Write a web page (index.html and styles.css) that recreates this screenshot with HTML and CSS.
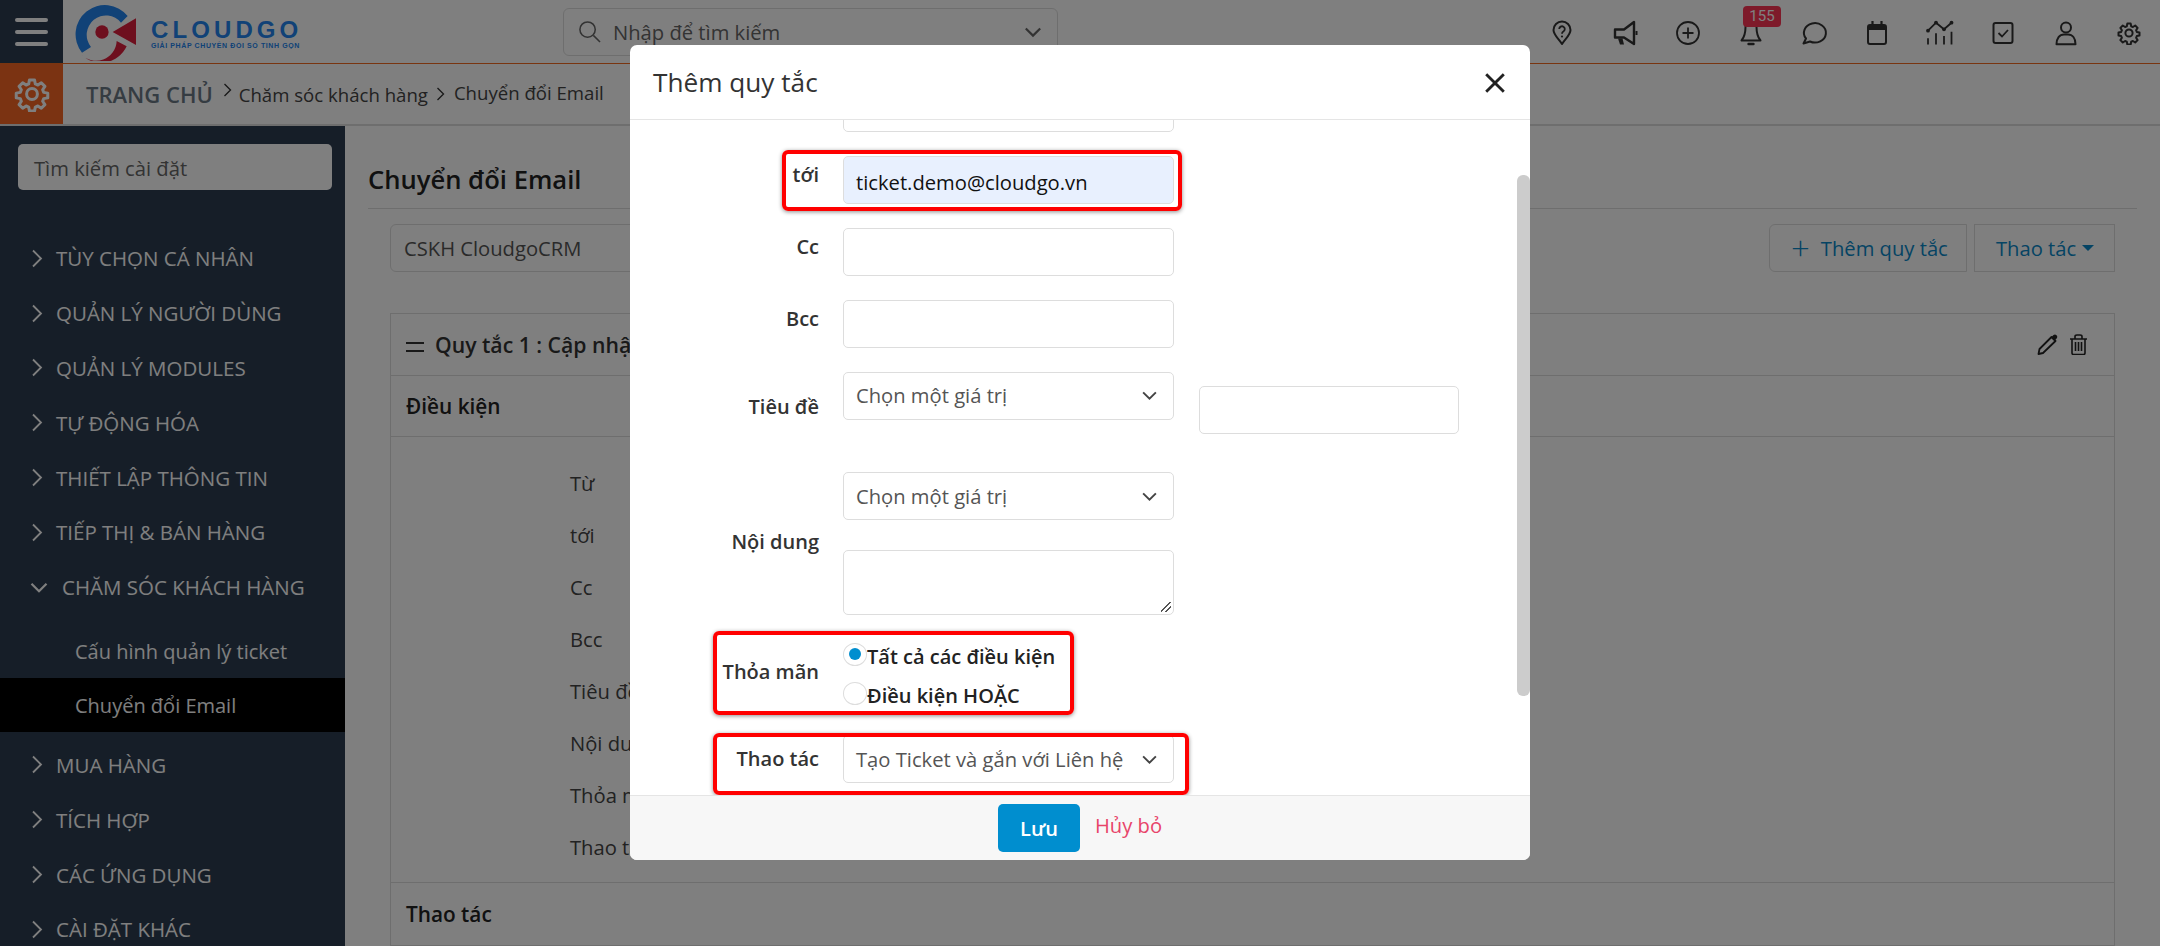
FILE: index.html
```html
<!DOCTYPE html>
<html lang="vi">
<head>
<meta charset="utf-8">
<title>Chuyển đổi Email</title>
<link rel="stylesheet" href="styles.css">
</head>
<body>
<svg class="defs" aria-hidden="true">
  <symbol id="gear" viewBox="0 0 24 24"><path d="M10.3 2.6h3.4l.5 2.7 1.7.7 2.3-1.5 2.4 2.4-1.5 2.3.7 1.7 2.7.5v3.2l-2.7.5-.7 1.7 1.5 2.3-2.4 2.4-2.3-1.5-1.7.7-.5 2.7h-3.4l-.5-2.7-1.7-.7-2.3 1.5-2.4-2.4 1.5-2.3-.7-1.7-2.7-.5v-3.2l2.7-.5.7-1.7-1.5-2.3 2.4-2.4 2.3 1.5 1.7-.7z" fill="none" stroke="currentColor" stroke-width="2" stroke-linejoin="round"/><circle cx="12" cy="12" r="3.6" fill="none" stroke="currentColor" stroke-width="2"/></symbol>
  <symbol id="right" viewBox="0 0 12 20"><path d="M2 2l8 8-8 8" fill="none" stroke="currentColor" stroke-width="1.8"/></symbol>
  <symbol id="down" viewBox="0 0 16 10"><path d="M2 2l6 6 6-6" fill="none" stroke="currentColor" stroke-width="1.8"/></symbol>
</svg>

<header class="topbar">
  <button class="menu-btn" aria-label="menu"><span></span><span></span><span></span></button>
  <div class="logo">
    <svg class="logo-mark" viewBox="222 6 190 174">
      <path d="M385 45A85 85 0 1 0 248 155L275 138A56 56 0 0 1 365 65z" fill="#2284ee"/>
      <path d="M245 160A85 85 0 0 0 382 136L352 120A62 62 0 0 1 245 160z" fill="#dc1e3c"/>
      <circle cx="308" cy="93" r="20" fill="#dc1e3c"/>
      <path d="M340 93L410 52V132z" fill="#dc1e3c"/>
    </svg>
    <div class="logo-text"><strong>CLOUDGO</strong><small>GIẢI PHÁP CHUYỂN ĐỔI SỐ TINH GỌN</small></div>
  </div>
  <div class="search">
    <svg class="search-ico" viewBox="0 0 24 24"><circle cx="10" cy="10" r="8" fill="none" stroke="currentColor" stroke-width="1.6"/><path d="M16 16l7 7" stroke="currentColor" stroke-width="1.6"/></svg>
    <span class="search-ph">Nhập để tìm kiếm</span>
    <svg class="search-caret"><use href="#down"/></svg>
  </div>
  <nav class="top-icons">
    <div class="top-icon"><svg viewBox="0 0 24 24"><path d="M12 23C9 18 3.5 14 3.5 9a8.5 8.5 0 0 1 17 0c0 5-5.5 9-8.5 14z" fill="none" stroke="currentColor" stroke-width="2" stroke-linejoin="round"/><path d="M9.2 8a2.8 2.8 0 1 1 4.2 2.5c-.9.5-1.4 1-1.4 2.2" fill="none" stroke="currentColor" stroke-width="1.8"/><circle cx="12" cy="15.5" r="1.1" fill="currentColor"/></svg></div>
    <div class="top-icon"><svg viewBox="0 0 24 24"><path d="M2 8.5h9l10-7.5v22l-10-6.5H2z" fill="none" stroke="currentColor" stroke-width="2.4" stroke-linejoin="round"/><path d="M5 17.5l2 6h4l-1.5-6z" fill="currentColor"/><path d="M23.5 10v4" stroke="currentColor" stroke-width="2"/></svg></div>
    <div class="top-icon"><svg viewBox="0 0 24 24"><circle cx="12" cy="12" r="11" fill="none" stroke="currentColor" stroke-width="1.8"/><path d="M12 6.5v11M6.5 12h11" stroke="currentColor" stroke-width="1.8"/></svg></div>
    <div class="top-icon bell">
      <svg viewBox="0 0 24 24"><path d="M6.5 6c0 7-1 10-4 13.5h19c-3-3.5-4-6.5-4-13.5a5.5 5.5 0 0 0-11 0z" fill="none" stroke="currentColor" stroke-width="2" stroke-linejoin="round"/><path d="M9.5 23h5" stroke="currentColor" stroke-width="2.4" stroke-linecap="round"/></svg>
      <span class="badge">155</span>
    </div>
    <div class="top-icon"><svg viewBox="0 0 24 24"><path d="M1.5 22.5L4 17.5A11 9.7 0 1 1 8 20.5z" fill="none" stroke="currentColor" stroke-width="2" stroke-linejoin="round"/></svg></div>
    <div class="top-icon"><svg viewBox="0 0 24 24"><rect x="3" y="4" width="18" height="19" rx="2" fill="none" stroke="currentColor" stroke-width="2"/><path d="M3 4h18v5H3z" fill="currentColor"/><path d="M7.5 0v5M16.5 0v5" stroke="currentColor" stroke-width="2.2"/></svg></div>
    <div class="top-icon"><svg viewBox="0 0 24 24"><path d="M0 9.7L8 1.7l8 6.6 7.5-6.6" fill="none" stroke="currentColor" stroke-width="1.8"/><circle cx="0" cy="9.7" r="1.9" fill="currentColor"/><circle cx="8" cy="1.7" r="1.9" fill="currentColor"/><circle cx="16" cy="8.3" r="1.9" fill="currentColor"/><circle cx="23.5" cy="1.7" r="1.9" fill="currentColor"/><path d="M0 17.3v6.2M8 12.3v11.2M16 15v8.5M23.5 10.7v12.8" stroke="currentColor" stroke-width="1.8"/></svg></div>
    <div class="top-icon"><svg viewBox="0 0 24 24"><rect x="2.5" y="2" width="19" height="20" rx="2" fill="none" stroke="currentColor" stroke-width="2"/><path d="M7.5 12l3.5 3.5 6-6.500" fill="none" stroke="currentColor" stroke-width="1.8"/></svg></div>
    <div class="top-icon"><svg viewBox="0 0 24 24"><circle cx="12" cy="6.5" r="5" fill="none" stroke="currentColor" stroke-width="2"/><path d="M2.5 23.3c0-6 3-9.800 7.500-9.800h4c4.500 0 7.500 3.800 7.500 9.800z" fill="none" stroke="currentColor" stroke-width="2" stroke-linejoin="round"/></svg></div>
    <div class="top-icon"><svg><use href="#gear"/></svg></div>
  </nav>
</header>

<div class="crumbs">
  <div class="crumb-gear"><svg><use href="#gear"/></svg></div>
  <span class="crumb-home">TRANG CHỦ</span>
  <svg class="crumb-sep crumb-sep-first"><use href="#right"/></svg>
  <span class="crumb">Chăm sóc khách hàng</span>
  <svg class="crumb-sep"><use href="#right"/></svg>
  <span class="crumb crumb-last">Chuyển đổi Email</span>
</div>

<div class="shell">
  <aside class="sidebar">
    <div class="side-search">Tìm kiếm cài đặt</div>
    <ul class="side-menu">
      <li class="side-item"><svg><use href="#right"/></svg>TÙY CHỌN CÁ NHÂN</li>
      <li class="side-item"><svg><use href="#right"/></svg>QUẢN LÝ NGƯỜI DÙNG</li>
      <li class="side-item"><svg><use href="#right"/></svg>QUẢN LÝ MODULES</li>
      <li class="side-item"><svg><use href="#right"/></svg>TỰ ĐỘNG HÓA</li>
      <li class="side-item"><svg><use href="#right"/></svg>THIẾT LẬP THÔNG TIN</li>
      <li class="side-item"><svg><use href="#right"/></svg>TIẾP THỊ &amp; BÁN HÀNG</li>
      <li class="side-item side-open"><svg><use href="#down"/></svg>CHĂM SÓC KHÁCH HÀNG</li>
      <li class="side-sub">Cấu hình quản lý ticket</li>
      <li class="side-sub side-active">Chuyển đổi Email</li>
      <li class="side-item"><svg><use href="#right"/></svg>MUA HÀNG</li>
      <li class="side-item"><svg><use href="#right"/></svg>TÍCH HỢP</li>
      <li class="side-item"><svg><use href="#right"/></svg>CÁC ỨNG DỤNG</li>
      <li class="side-item"><svg><use href="#right"/></svg>CÀI ĐẶT KHÁC</li>
    </ul>
  </aside>

  <main class="content">
    <h1 class="page-title">Chuyển đổi Email</h1>
    <div class="toolbar">
      <div class="mailbox">CSKH CloudgoCRM</div>
      <div class="tool-btn tool-add"><span class="plus">+</span>Thêm quy tắc</div>
      <div class="tool-btn tool-act">Thao tác<i class="tool-caret"></i></div>
    </div>
    <section class="rule">
      <div class="rule-head">
        <span class="rule-grip"></span>
        <b>Quy tắc 1 : Cập nhật Ticket</b>
        <span class="rule-tools">
          <svg class="tool-pencil" viewBox="0 0 21 21"><path d="M1.5 20l1-5L14.5 3l4 4L6 19z" fill="none" stroke="currentColor" stroke-width="1.8" stroke-linejoin="round"/><path d="M14 3.5l2.500-2.500c1-.8 2-.8 3 .2s1 2 .2 3L17.500 6.800z" fill="currentColor"/></svg>
          <svg class="tool-trash" viewBox="0 0 19 21"><path d="M1 5h17M6 5V2.500C6 1.500 7 1 8 1h3c1 0 2 .5 2 1.500V5M3 5v14c0 1 .5 1.500 1.500 1.500h10c1 0 1.500-.5 1.500-1.500V5M6.500 8v9M9.500 8v9M12.500 8v9" fill="none" stroke="currentColor" stroke-width="1.6"/></svg>
        </span>
      </div>
      <div class="rule-section">Điều kiện</div>
      <div class="rule-fields">
        <div>Từ</div><div>tới</div><div>Cc</div><div>Bcc</div><div>Tiêu đề</div><div>Nội dung</div><div>Thỏa mãn</div><div>Thao tác</div>
      </div>
      <div class="rule-section rule-last">Thao tác</div>
    </section>
  </main>
</div>

<div class="backdrop"></div>

<div class="modal">
  <div class="modal-head">
    <h2>Thêm quy tắc</h2>
    <svg class="modal-close" viewBox="0 0 20 20"><path d="M2 2l16 16M18 2L2 18" stroke="currentColor" stroke-width="2.6"/></svg>
  </div>
  <div class="modal-body">
    <div class="form">
      <div class="row row-cut"><span class="lab"></span><div class="field"></div></div>
      <div class="row"><span class="lab lab-top">tới</span><div class="field field-filled">ticket.demo@cloudgo.vn</div></div>
      <div class="row"><span class="lab lab-top">Cc</span><div class="field"></div></div>
      <div class="row"><span class="lab lab-top">Bcc</span><div class="field"></div></div>
      <div class="row row-subject">
        <span class="lab lab-low">Tiêu đề</span>
        <div class="field field-sel">Chọn một giá trị<svg><use href="#down"/></svg></div>
        <div class="field field-extra"></div>
      </div>
      <div class="row row-body">
        <span class="lab">Nội dung</span>
        <div class="stack">
          <div class="field field-sel">Chọn một giá trị<svg><use href="#down"/></svg></div>
          <div class="area"></div>
        </div>
      </div>
      <div class="row row-match">
        <span class="lab">Thỏa mãn</span>
        <div class="radios">
          <div class="radio-line"><i class="radio radio-on"></i>Tất cả các điều kiện</div>
          <div class="radio-line"><i class="radio"></i>Điều kiện HOẶC</div>
        </div>
      </div>
      <div class="row row-action"><span class="lab lab-action">Thao tác</span><div class="field field-sel">Tạo Ticket và gắn với Liên hệ<svg><use href="#down"/></svg></div></div>
    </div>
    <div class="scrollbar"></div>
    <div class="mark mark-to"></div>
    <div class="mark mark-match"></div>
    <div class="mark mark-action"></div>
  </div>
  <div class="modal-foot">
    <button class="save">Lưu</button>
    <span class="cancel">Hủy bỏ</span>
  </div>
</div>
</body>
</html>
```

FILE: styles.css
```css
* { box-sizing: border-box; }
html, body { margin: 0; height: 946px; overflow: hidden; }
body { font-family: "Open Sans", sans-serif; font-size: 20.2px; color: #333; background: #fff; position: relative; }
.defs { display: none; }
ul { list-style: none; margin: 0; padding: 0; }
h1, h2 { margin: 0; font-weight: 600; }

.topbar { display: flex; align-items: center; height: 64px; border-bottom: 1px solid #f26a21; background: #fff; }
.menu-btn { width: 63px; height: 63px; flex: none; background: #2c3c50; border: 0; padding: 1px 0 0; display: flex; flex-direction: column; align-items: center; justify-content: center; gap: 8px; }
.menu-btn span { display: block; width: 33px; height: 4px; border-radius: 2px; background: #fff; }
.logo { display: flex; align-items: center; width: 500px; padding-left: 10px; gap: 14px; }
.logo-mark { width: 64px; height: 58px; flex: none; }
.logo-text { display: flex; flex-direction: column; color: #2284ee; padding-top: 4px; }
.logo-text strong { font-family: "Liberation Sans", sans-serif; font-size: 24px; line-height: 23px; letter-spacing: 4.1px; font-weight: 700; }
.logo-text small { font-family: "Liberation Sans", sans-serif; font-size: 7px; font-weight: 700; line-height: 9px; letter-spacing: .6px; white-space: nowrap; }
.search { width: 495px; height: 48px; border: 1px solid #ddd; border-radius: 6px; display: flex; align-items: center; padding: 0 14px; gap: 12px; background: #fff; color: #666; }
.search-ico { width: 23px; height: 23px; flex: none; }
.search-ph { flex: 1; }
.search-caret { width: 20px; height: 12px; }
.top-icons { margin-left: auto; display: grid; grid-template-columns: repeat(10, 63px); color: #333; padding-top: 3px; }
.top-icon { height: 24px; display: flex; justify-content: center; position: relative; }
.top-icon svg { width: 24px; height: 24px; display: block; overflow: visible; }
.badge { position: absolute; left: 24px; top: -15px; width: 38px; height: 21px; border-radius: 4px; background: #fc3454; color: #fff; font-family: Roboto, sans-serif; font-size: 15px; line-height: 21px; text-align: center; }

.crumbs { display: flex; align-items: center; height: 62px; border-bottom: 2px solid #ddd; background: #fff; color: #444; }
.crumb-gear { width: 63px; height: 60px; background: #f76725; color: #fff; display: flex; align-items: center; justify-content: center; margin-right: 23px; }
.crumb-gear svg { width: 36px; height: 36px; }
.crumb-home { font-size: 22px; font-weight: 600; color: #6b7885; }
.crumb { font-size: 18.6px; }
.crumb-last { margin-bottom: 3px; }
.crumb-sep { width: 9px; height: 16px; margin: 0 9px 0 8px; color: #333; }
.crumb-sep-first { margin: 0 7px 8px 10px; }

.shell { display: flex; height: 820px; }
.sidebar { width: 345px; flex: none; background: #2c3c50; padding: 18px 0 0; color: #fff; }
.side-search { margin: 0 13px 0 18px; height: 46px; border-radius: 5px; background: #fff; color: #666; padding: 0 16px; line-height: 48px; }
.side-menu { margin-top: 41px; }
.side-item { height: 54.8px; padding-left: 31px; display: flex; align-items: center; white-space: nowrap; font-size: 20.5px; }
.side-item svg { width: 12px; height: 21px; margin-right: 13px; flex: none; }
.side-open svg { width: 20px; height: 13px; margin-right: 13px; }
.side-open { margin-bottom: 9px; padding-left: 29px; }
.side-sub { height: 54px; line-height: 55px; padding-left: 75px; font-size: 20px; }
.side-active { background: #000; margin-bottom: 6px; }

.content { flex: 1; padding: 0 23px; overflow: hidden; min-width: 0; }
.page-title { font-size: 25.6px; padding-top: 26px; line-height: 56px; height: 83px; border-bottom: 1px solid #ddd; color: #222; }
.toolbar { display: flex; align-items: stretch; height: 48px; margin: 15px 0 0 22px; }
.mailbox { width: 290px; border: 1px solid #ddd; border-radius: 6px; background: #fff; line-height: 47px; padding: 0 13px; color: #555; margin-right: auto; }
.tool-btn { border: 1px solid #ddd; color: #0a88c8; background: #fff; display: flex; align-items: center; white-space: nowrap; }
.tool-add { width: 198px; border-radius: 6px 0 0 6px; padding-left: 21px; margin-right: 7px; }
.plus { font-size: 33px; font-weight: 300; margin-right: 11px; line-height: 40px; }
.tool-act { width: 141px; padding-left: 21px; margin-right: 22px; }
.tool-caret { width: 0; height: 0; border: 6px solid transparent; border-top-color: #0a88c8; border-bottom: 0; margin-left: 6px; }
.rule { margin: 41px 22px 0 22px; border: 1px solid #ddd; border-bottom: 0; height: 633px; }
.rule-head { height: 62px; border-bottom: 1px solid #ddd; display: flex; align-items: center; padding-left: 15px; font-size: 21.2px; white-space: nowrap; }
.rule-head b { font-weight: 600; }
.rule-grip { width: 18px; height: 10px; border-top: 2px solid #333; border-bottom: 2px solid #333; margin: 4px 11px 0 0; }
.rule-tools { margin-left: auto; padding-right: 26px; display: flex; gap: 11px; color: #222; }
.tool-pencil { width: 21px; height: 21px; }
.tool-trash { width: 19px; height: 21px; }
.rule-section { height: 61px; border-bottom: 1px solid #ddd; line-height: 60px; padding-left: 15px; font-weight: 600; font-size: 20.8px; color: #222; }
.rule-fields { height: 445px; padding: 20px 0 0 179px; }
.rule-fields div { height: 52px; line-height: 52px; color: #444; }
.rule-last { border-top: 1px solid #ddd; height: 64px; line-height: 62px; }

.backdrop { position: absolute; inset: 0; background: rgba(0,0,0,.5); }

.modal { position: absolute; left: 630px; top: 45px; width: 900px; height: 815px; background: #fff; border-radius: 7px; display: flex; flex-direction: column; overflow: hidden; }
.modal-head { height: 75px; flex: none; border-bottom: 1px solid #e5e5e5; display: flex; align-items: center; justify-content: space-between; padding: 1px 24px 0 23px; }
.modal-head h2 { font-size: 26.2px; line-height: 1; color: #333; font-weight: 500; }
.modal-close { width: 22px; height: 22px; color: #222; }
.modal-body { flex: 1; position: relative; overflow: hidden; }
.form { margin-top: -36px; display: flex; flex-direction: column; }
.row { display: flex; align-items: center; gap: 24px; margin-bottom: 24px; }
.lab { width: 189px; text-align: right; font-weight: 600; font-size: 20px; color: #333; flex: none; }
.lab-top { align-self: flex-start; padding-top: 5px; }
.lab-low { align-self: flex-start; padding-top: 21px; }
.lab-action { align-self: flex-start; padding-top: 10px; }
.field { width: 331px; height: 48px; border: 1px solid #ddd; border-radius: 5px; background: #fff; line-height: 46px; padding: 0 12px; flex: none; color: #333; white-space: nowrap; }
.field-filled { background: #e8f0fe; color: #111; line-height: 50px; }
.field-sel { display: flex; justify-content: space-between; align-items: center; color: #555; }
.field-sel svg { width: 17px; height: 11px; color: #444; margin-right: 3px; flex: none; }
.field-extra { width: 260px; margin: 14px 0 0 1px; }
.row-subject { align-items: flex-start; margin-bottom: 38px; }
.row-subject .field-sel { padding-bottom: 2px; }
.stack { display: flex; flex-direction: column; gap: 30px; }
.area { width: 331px; height: 65px; border: 1px solid #ddd; border-radius: 5px; position: relative; }
.area::after { content: ""; position: absolute; right: 2px; bottom: 2px; width: 10px; height: 10px; background: linear-gradient(135deg, transparent 45%, #555 45%, #555 55%, transparent 55%, transparent 70%, #555 70%, #555 80%, transparent 80%); }
.row-body { margin-bottom: 0; }
.row-body .lab { padding-bottom: 4px; }
.row-match { margin: 26px 0 25px; }
.row-match .lab { padding-bottom: 8px; }
.radios { display: flex; flex-direction: column; gap: 9px; }
.radio-line { display: flex; align-items: center; font-weight: 600; font-size: 20px; height: 30px; color: #222; }
.radio { width: 24px; height: 23px; border-radius: 50%; border: 1px solid #ddd; position: relative; display: block; margin-bottom: 4px; }
.radio-on::after { content: ""; position: absolute; left: 5px; top: 4px; width: 12px; height: 12px; border-radius: 50%; background: #008ecf; }
.row-action { margin-bottom: 0; }
.scrollbar { position: absolute; right: 0; top: 55px; width: 13px; height: 521px; border-radius: 6px; background: #ccc; }
.mark { position: absolute; border: 4px solid #f00; border-radius: 6px; box-shadow: 0 1px 4px rgba(0,0,0,.45); }
.mark-to { left: 152px; top: 30px; width: 400px; height: 61px; }
.mark-match { left: 83px; top: 511px; width: 361px; height: 84px; }
.mark-action { left: 83px; top: 613px; width: 476px; height: 62px; }
.modal-foot { height: 65px; flex: none; background: #f7f7f7; border-top: 1px solid #e5e5e5; display: flex; align-items: center; justify-content: center; gap: 15px; }
.save { width: 82px; height: 48px; border: 0; border-radius: 5px; background: #008ecf; color: #fff; font: 600 20px "Open Sans", sans-serif; }
.cancel { color: #e8446a; font-size: 20.2px; margin-bottom: 6px; }
```
